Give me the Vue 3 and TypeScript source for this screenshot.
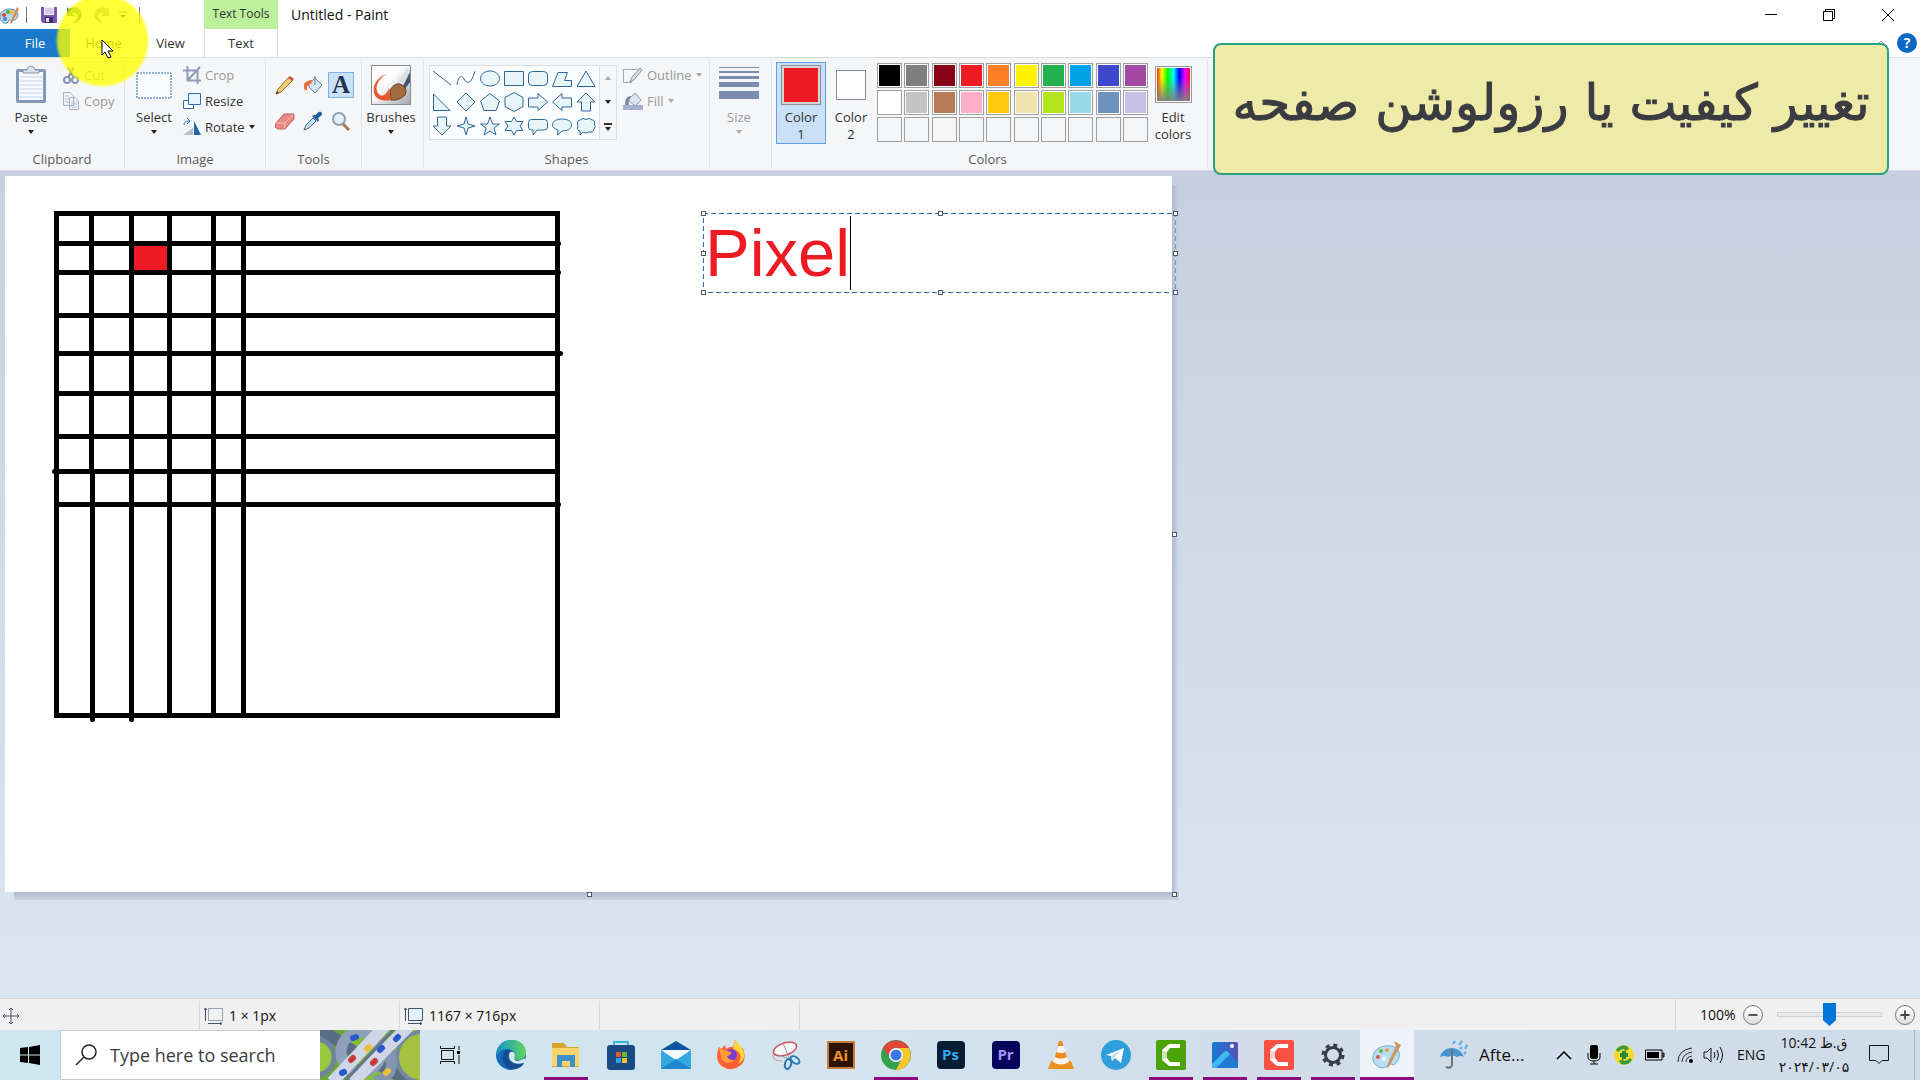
<script setup lang="ts">
import { ref } from 'vue'

interface Line { x1: number; y1: number; x2: number; y2: number }

const drawnText = ref('Pixel')
const zoom = ref(50)
const search = ref('')

const palette: string[] = [
  '#000000', '#7f7f7f', '#880015', '#ed1c24', '#ff7f27', '#fff200', '#22b14c', '#00a2e8', '#3f48cc', '#a349a4',
  '#ffffff', '#c3c3c3', '#b97a57', '#ffaec9', '#ffc90e', '#efe4b0', '#b5e61d', '#99d9ea', '#7092be', '#c8bfe7',
  '', '', '', '', '', '', '', '', '', '',
]

const shapes: { name: string; d: string }[] = [
  { name: 'Line', d: 'M1 3L19 17' },
  { name: 'Curve', d: 'M1 17C2 9 5 6 8 11S15 17 19 3' },
  { name: 'Oval', d: 'M10 3C15 3 19.500 6 19.500 10.500S15 18 10 18S.5 15 .5 10.500S5 3 10 3Z' },
  { name: 'Rectangle', d: 'M.5 3.500H19.500V17.500H.5Z' },
  { name: 'Rounded rectangle', d: 'M4.500 3.500H15.500Q19.500 3.500 19.500 7V14Q19.500 17.500 15.500 17.500H4.500Q.5 17.500 .5 14V7Q.5 3.500 4.500 3.500Z' },
  { name: 'Polygon', d: 'M6 4.500H15.500L12.500 12.500H19.500V18.500H.5Z' },
  { name: 'Triangle', d: 'M10 3L19 18.500H1Z' },
  { name: 'Right triangle', d: 'M1.500 2V18.500H18Z' },
  { name: 'Diamond', d: 'M10 1L19 10L10 19L1 10Z' },
  { name: 'Pentagon', d: 'M10 1.500L19.500 9L16 18.500H4L.5 9Z' },
  { name: 'Hexagon', d: 'M10 .5L19 5.500V14.500L10 19.500L1 14.500V5.500Z' },
  { name: 'Right arrow', d: 'M.5 6H10V1.500L19.500 10L10 18.500V15H.5Z' },
  { name: 'Left arrow', d: 'M19.500 6H10V1.500L.5 10L10 18.500V15H19.500Z' },
  { name: 'Up arrow', d: 'M10 1L19 10H14.500V19H5.500V10H1Z' },
  { name: 'Down arrow', d: 'M10 19L19 10H14.500V1H5.500V10H1Z' },
  { name: 'Four-point star', d: 'M10 1L12 8L19 10L12 12L10 19L8 12L1 10L8 8Z' },
  { name: 'Five-point star', d: 'M10 1L12.500 8H19.500L14 12L16 19L10 15L4 19L6 12L.5 8H7.500Z' },
  { name: 'Six-point star', d: 'M10 1L12.500 5.500H19L16 10L19 14.500H12.500L10 19L7.500 14.500H1L4 10L1 5.500H7.500Z' },
  { name: 'Rounded callout', d: 'M3.500 3.500H16.500Q19.500 3.500 19.500 6.500V11Q19.500 14 16.500 14H9L5 19V14H3.500Q.5 14 .5 11V6.500Q.5 3.500 3.500 3.500Z' },
  { name: 'Oval callout', d: 'M10 3C15 3 19.500 5 19.500 9S15 15 10 15L5.500 19L6 14C3 13 .5 11.500 .5 9C.5 5 5 3 10 3Z' },
  { name: 'Cloud callout', d: 'M4 4Q7 1 10 3.500Q14 1 16 4Q19.500 4 18.500 8Q20 11 18 13Q17 17 13 16Q9 18 7 16L4 19L4 15Q0 14 2 10.500Q0 5 4 4Z' },
]

const verticals: Line[] = [
  { x1: 91, y1: 215, x2: 91, y2: 471 },
  { x1: 92, y1: 471, x2: 92, y2: 719 },
  { x1: 131, y1: 213, x2: 131, y2: 719 },
  { x1: 169, y1: 215, x2: 169, y2: 714 },
  { x1: 213, y1: 215, x2: 213, y2: 714 },
  { x1: 243, y1: 215, x2: 243, y2: 714 },
]
const horizontals: Line[] = [
  { x1: 58, y1: 243, x2: 558, y2: 243 },
  { x1: 56, y1: 272, x2: 558, y2: 272 },
  { x1: 58, y1: 315, x2: 556, y2: 315 },
  { x1: 56, y1: 353, x2: 560, y2: 353 },
  { x1: 58, y1: 393, x2: 556, y2: 393 },
  { x1: 56, y1: 436, x2: 556, y2: 436 },
  { x1: 54, y1: 471, x2: 556, y2: 471 },
  { x1: 56, y1: 504, x2: 558, y2: 504 },
]
const strokes: Line[] = [...verticals, ...horizontals]
const handles: string[] = ['nw', 'n', 'ne', 'w', 'e', 'sw', 's', 'se']
</script>

<template>
  <div class="app">
    <header class="titlebar">
      <div class="quick">
        <svg class="ico20" viewBox="0 0 20 20">
          <path d="M9 4C3 4-1 9 0 13C1 17 4 19 7 18C9 17 8 15 10 15C13 17 18 14 18 10C18 6 14 4 9 4Z" fill="#b5d5ea" stroke="#5e93b8" />
          <circle cx="4" cy="10" r="2" fill="#d8483d" /><circle cx="8" cy="7" r="2" fill="#5caf3f" /><circle cx="12" cy="7" r="2" fill="#e9b93c" /><circle cx="5" cy="14" r="2" fill="#4d7ec9" />
          <path d="M17 2L19 4L12 18L10 19L11 16Z" fill="#d48b45" />
        </svg>
        <i class="bar"></i>
        <button aria-label="Save"><svg viewBox="0 0 16 16"><path d="M0 0H16V16H2L0 14Z" fill="#7b58b5" /><path d="M3 0H13V8H3Z" fill="#f3eefb" /><path d="M4 2H12M4 4H12M4 6H12" stroke="#b8a5d6" /><path d="M4 10H12V16H4Z" fill="#3e2d66" /><path d="M5 11H8V15H5Z" fill="#e6e0f0" /></svg></button>
        <button aria-label="Undo"><svg viewBox="0 0 16 16"><path d="M0 0L2 2Q8-2 13 3Q18 10 9 16H6Q13 10 10 7Q8 5 5 6L8 9H0Z" fill="#4e8a50" /></svg></button>
        <button aria-label="Redo"><svg viewBox="0 0 16 16"><path d="M16 0L14 2Q8-2 3 3Q-2 10 7 16H10Q3 10 6 7Q8 5 11 6L8 9H16Z" fill="#9aa6a0" /></svg></button>
        <button class="more" aria-label="Customize toolbar"><svg viewBox="0 0 8 8"><path d="M0 1H8" stroke="#333" /><path d="M1 4H7L4 7Z" fill="#333" /></svg></button>
        <i class="bar"></i>
      </div>
      <div class="context">Text Tools</div>
      <h1>Untitled - Paint</h1>
      <div class="window-buttons">
        <button aria-label="Minimize"><svg viewBox="0 0 14 14"><path d="M1 6.500H13" stroke="#000" /></svg></button>
        <button aria-label="Restore"><svg viewBox="0 0 14 14"><path d="M1.500 3.500H10.500V12.500H1.500ZM3.500 3V1.500H12.500V10.500H11" fill="none" stroke="#000" /></svg></button>
        <button aria-label="Close"><svg viewBox="0 0 14 14"><path d="M1 1L13 13M13 1L1 13" stroke="#000" /></svg></button>
      </div>
    </header>

    <nav class="tabs">
      <button class="file">File</button>
      <button class="home">Home</button>
      <button class="view">View</button>
      <button class="text">Text</button>
      <div class="help">
        <button aria-label="Collapse ribbon"><svg viewBox="0 0 10 8"><path d="M1 6L5 2L9 6" fill="none" stroke="#888" /></svg></button>
        <button class="q" aria-label="Help">?</button>
      </div>
    </nav>

    <section class="ribbon">
      <div class="group clipboard">
        <div class="body">
          <button class="big">
            <svg width="32" height="40" viewBox="0 0 32 40"><rect x="1" y="4" width="30" height="34" rx="2" fill="#8397b8" /><rect x="4" y="7" width="24" height="28" fill="#f6faff" /><path d="M5 12H27M5 16H27M5 20H27M5 24H27M5 28H27M5 32H27" stroke="#c2d3ea" /><path d="M8 8V5H12C12 0 20 0 20 5H24V8Z" fill="#dbe2ec" stroke="#8594aa" /></svg>
            <span>Paste</span><i class="caret"></i>
          </button>
          <div class="stack">
            <button class="row off"><svg width="18" height="18" viewBox="0 0 18 18"><path d="M6 1L12 12M12 1L6 12" stroke="#77839b" stroke-width="2" /><circle cx="5" cy="14" r="3" fill="none" stroke="#8795b8" stroke-width="2" /><circle cx="13" cy="14" r="3" fill="none" stroke="#8795b8" stroke-width="2" /></svg>Cut</button>
            <button class="row off"><svg width="18" height="18" viewBox="0 0 18 18"><path d="M1.500.5H8L11.500 4V13.500H1.500ZM7.500 5.500H13L16.500 9V17.500H7.500Z" fill="#f2f5fb" stroke="#a5b0c9" /><path d="M3 4H7M3 7H7M3 10H7M9 10H15M9 12H15M9 15H15" stroke="#b4bfd6" /></svg>Copy</button>
          </div>
        </div>
        <h2>Clipboard</h2>
      </div>

      <div class="group image">
        <div class="body">
          <button class="big">
            <svg width="36" height="40" viewBox="0 0 36 40"><rect x="1" y="8" width="34" height="25" fill="#f9fcff" stroke="#2c66a5" stroke-width="1" stroke-dasharray="2 1" /></svg>
            <span>Select</span><i class="caret"></i>
          </button>
          <div class="stack">
            <button class="row off"><svg width="18" height="18" viewBox="0 0 18 18"><path d="M4.500 0V14.500H18M0 4.500H14.500V18M5 14L17 1" fill="none" stroke="#8e9cb8" stroke-width="2" /></svg>Crop</button>
            <button class="row"><svg width="18" height="18" viewBox="0 0 18 18"><path d="M.5 8.500H10.500V16.500H.5Z" fill="#fff" stroke="#2c6cb0" /><path d="M5.500 1.500H17.500V12.500H5.500Z" fill="#eaf4fd" stroke="#2c6cb0" /></svg>Resize</button>
            <button class="row"><svg width="18" height="18" viewBox="0 0 18 18"><path d="M0 17H10V10Z" fill="#b9bcc0" /><path d="M11 17V3L18 17Z" fill="#1f66a8" /><path d="M1 7Q1 3 6 3M4 0L7 3L4 6" fill="none" stroke="#2c7cc8" /></svg>Rotate<i class="caret"></i></button>
          </div>
        </div>
        <h2>Image</h2>
      </div>

      <div class="group tools">
        <div class="tool-grid">
          <button aria-label="Pencil"><svg viewBox="0 0 20 20"><path d="M1 19L3 14L14 2L18 5L6 17Z" fill="#f0cd72" stroke="#8d6b2b" /><path d="M13 3L15 1L19 4L17 6Z" fill="#cb5459" /><path d="M1 19L2 16L4 18Z" fill="#333" /></svg></button>
          <button aria-label="Fill with color"><svg viewBox="0 0 20 20"><path d="M6 9L12 3L19 10L12 18L6 12Z" fill="#d7e7f4" stroke="#607d9b" /><path d="M12 10V1" stroke="#6c7f95" /><path d="M10 5C5 5 0 7 1 12C1 16 4 17 4 13C4 10 7 9 8 9Z" fill="#ec6c35" /></svg></button>
          <button class="on" aria-label="Text">A</button>
          <button aria-label="Eraser"><svg viewBox="0 0 20 20"><path d="M1 12L9 3H19V8L10 18H3L0 16Z" fill="#e98984" stroke="#bc625f" /><path d="M1 12H10L18 4M10 12V17" fill="none" stroke="#f8bab2" /></svg></button>
          <button aria-label="Color picker"><svg viewBox="0 0 20 20"><path d="M1 19L3 14L10 7L13 10L6 17Z" fill="#c4e2f5" stroke="#44617c" /><path d="M9 5L15 11L16 9L15 7C19 5 20 2 18 1S14 2 13 4L11 4Z" fill="#245f9e" /></svg></button>
          <button aria-label="Magnifier"><svg viewBox="0 0 20 20"><circle cx="8" cy="8" r="6" fill="#e2f2fc" stroke="#929fac" stroke-width="2" /><path d="M12 13L18 19" stroke="#a47b57" stroke-width="3" /></svg></button>
        </div>
        <h2>Tools</h2>
      </div>

      <div class="group brushes">
        <div class="body">
          <button class="big">
            <svg width="40" height="40" viewBox="0 0 40 40"><defs><linearGradient id="br" x1="0" x2="1" y1="0" y2="1"><stop offset=".4" stop-color="#fff" /><stop offset="1" stop-color="#9fa6ad" /></linearGradient></defs><rect x=".5" y=".5" width="39" height="39" fill="url(#br)" stroke="#898d91" /><path d="M39 6L28 21L34 24L39 17Z" fill="#46566a" /><path d="M37 2L25 19L31 23L39 7Z" fill="#d9dee3" /><path d="M19 25Q25 16 31 20Q37 24 34 30Q28 36 20 35Z" fill="#a26d3e" stroke="#6b4325" /><path d="M16 9C5 12-1 24 5 32Q10 37 20 35L18 23C15 32 9 32 7 28C3 22 8 13 16 9Z" fill="#e8592e" /></svg>
            <span>Brushes</span><i class="caret"></i>
          </button>
        </div>
      </div>

      <div class="group shapes">
        <div class="body">
          <div class="gallery">
            <button v-for="s in shapes" :key="s.name" :aria-label="s.name"><svg viewBox="0 0 20 20"><path :d="s.d" :fill="s.name === 'Line' || s.name === 'Curve' ? 'none' : '#e8f5fb'" stroke="#2f6899" /></svg></button>
          </div>
          <div class="scroller">
            <button aria-label="Scroll up"><i class="caret up"></i></button>
            <button aria-label="Scroll down"><i class="caret"></i></button>
            <button aria-label="More shapes"><i class="line"></i><i class="caret"></i></button>
          </div>
          <div class="stack">
            <button class="row off"><svg width="20" height="18" viewBox="0 0 20 18"><path d="M.5 3.500H15M.5 3V16.500H9" fill="none" stroke="#a1a8b5" /><path d="M7 16L9 11L17 2L19 4L11 14Z" fill="#d6dbe2" stroke="#8c95a3" /></svg>Outline<i class="caret"></i></button>
            <button class="row off"><svg width="20" height="18" viewBox="0 0 20 18"><path d="M0 13H20V18H0Z" fill="#a5b0ce" /><path d="M5 8L12 1L18 8L12 14Z" fill="#dce5ef" stroke="#8a9ab0" /><path d="M8 4Q2 4 2 13H6Q5 9 7 7Z" fill="#7688a2" /></svg>Fill<i class="caret"></i></button>
          </div>
        </div>
        <h2>Shapes</h2>
      </div>

      <div class="group size">
        <div class="body">
          <button class="big off">
            <svg width="40" height="40" viewBox="0 0 40 40"><path d="M0 2H40V3H0ZM0 6H40V8H0ZM0 11H40V14H0ZM0 17H40V22H0ZM0 26H40V34H0Z" fill="#7c8caf" /></svg>
            <span>Size</span><i class="caret"></i>
          </button>
        </div>
      </div>

      <div class="group colors">
        <div class="body">
          <button class="color on"><i class="swatch red"></i><span>Color<br />1</span></button>
          <button class="color"><i class="swatch white"></i><span>Color<br />2</span></button>
          <div class="palette">
            <button v-for="(c, i) in palette" :key="i" :class="{ empty: !c }" :style="{ backgroundColor: c }" :aria-label="'Palette color ' + (i + 1)"></button>
          </div>
          <button class="color edit"><i class="spectrum"></i><span>Edit<br />colors</span></button>
        </div>
        <h2>Colors</h2>
      </div>
    </section>

    <main class="workspace">
      <div class="sheet">
        <svg class="drawing" width="1167" height="716" viewBox="5 176 1167 716">
          <rect x="131" y="243" width="38" height="29" fill="#ed1c24" />
          <g transform="translate(.5 .5)" fill="none" stroke="#000" stroke-width="5" stroke-linecap="round">
            <rect x="56" y="213" width="501" height="502" />
            <line v-for="(l, i) in strokes" :key="i" :x1="l.x1" :y1="l.y1" :x2="l.x2" :y2="l.y2" />
          </g>
        </svg>
        <div class="textbox">
          <svg class="dash" width="100%" height="100%"><rect width="100%" height="100%" fill="none" stroke="#fff" stroke-width="2" /><rect width="100%" height="100%" fill="none" stroke="#2a6ab0" stroke-width="2" stroke-dasharray="5 3" /></svg>
          <input v-model="drawnText" aria-label="Canvas text" />
          <i class="cursor"></i>
          <i v-for="h in handles" :key="h" class="handle" :class="h"></i>
        </div>
        <i class="handle sheet-e"></i>
        <i class="handle sheet-s"></i>
        <i class="handle sheet-se"></i>
      </div>
    </main>

    <footer class="status">
      <div class="cell"><svg width="18" height="18" viewBox="0 0 18 18"><path d="M9 1V17M1 9H17M7 3L9 1L11 3M7 15L9 17L11 15M3 7L1 9L3 11M15 7L17 9L15 11" fill="none" stroke="#44546e" /></svg></div>
      <div class="cell"><svg width="20" height="18" viewBox="0 0 20 18"><path d="M4.500 1.500H18.500V13.500H4.500Z" fill="none" stroke="#44546e" stroke-dasharray="1 1" /><path d="M1.500 1V14M0 3L1.500 1L3 3M4 16.500H18M16 15L18 16.500L16 18" fill="none" stroke="#44546e" /></svg>1 × 1px</div>
      <div class="cell"><svg width="20" height="18" viewBox="0 0 20 18"><path d="M4.500 1.500H18.500V13.500H4.500Z" fill="#e3f3fc" stroke="#44546e" /><path d="M1.500 1V14M0 3L1.500 1L3 3M4 16.500H18M16 15L18 16.500L16 18" fill="none" stroke="#44546e" /></svg>1167 × 716px</div>
      <div class="cell"></div>
      <div class="zoom">
        <label for="zoom">100%</label>
        <button aria-label="Zoom out"><svg viewBox="0 0 20 20"><path d="M5 10H15" stroke="#444" stroke-width="2" /></svg></button>
        <input id="zoom" v-model="zoom" type="range" min="0" max="100" />
        <button aria-label="Zoom in"><svg viewBox="0 0 20 20"><path d="M5 10H15M10 5V15" stroke="#444" stroke-width="2" /></svg></button>
      </div>
    </footer>

    <div class="taskbar">
      <button class="start" aria-label="Start"><svg width="20" height="20" viewBox="0 0 20 20"><path d="M0 3L8 2V9.500H0ZM9 2L20 0V9.500H9ZM0 10.500H8V18L0 17ZM9 10.500H20V20L9 18Z" /></svg></button>
      <label class="search">
        <svg width="22" height="22" viewBox="0 0 22 22"><circle cx="14" cy="8" r="7" fill="none" stroke="#222" stroke-width="1.500" /><path d="M9 13L1 21" stroke="#222" stroke-width="1.500" /></svg>
        <input v-model="search" placeholder="Type here to search" aria-label="Search" />
      </label>
      <svg class="art" width="100" height="50" viewBox="0 0 100 50">
        <rect width="100" height="50" fill="#80bd38" />
        <path d="M0 0H24L45 50H0Z" fill="#6ca63a" /><path d="M-5-5L40 26M55 32L95 55" stroke="#596d86" stroke-width="12" />
        <circle cx="-4" cy="27" r="18" fill="#97c93d" stroke="#70829c" stroke-width="5" /><circle cx="102" cy="27" r="25" fill="#a6c13f" stroke="#7588a3" stroke-width="4" />
        <circle cx="41" cy="22" r="20" fill="none" stroke="#8fa0bd" stroke-width="11" /><path d="M55 52Q78 46 69 20" fill="none" stroke="#8294af" stroke-width="11" />
        <path d="M12 52L65-4M33 52L90-5" stroke="#ced6e8" stroke-width="12" /><path d="M24 52L77-4" stroke="#65748c" stroke-width="3" />
        <g stroke-width="6" stroke-linecap="round"><path d="M33 8L36 7M76 9L78 7M60 20L62 18M22 43L24 42" stroke="#2758cb" /><path d="M31 30L33 28M53 33L55 31" stroke="#c63b36" /><path d="M47 19L49 17M66 43L68 41" stroke="#ebc03f" /></g>
      </svg>
      <button class="taskview" aria-label="Task view"><svg width="20" height="20" viewBox="0 0 20 20"><path d="M1.500 5.500H13.500V14.500H1.500ZM.5 1V3.500H14.500V1M.5 19V16.500H14.500V19M19 1V5M19 10V19" fill="none" stroke="#111" /><path d="M17 6H20V9H17Z" /></svg></button>

      <div class="apps">
        <button aria-label="Edge"><svg viewBox="0 0 30 30"><defs><linearGradient id="e1" x1="0" x2="1"><stop stop-color="#1595c9" /><stop offset="1" stop-color="#62d65b" /></linearGradient></defs><circle cx="15" cy="15" r="15" fill="#1468b5" /><path d="M1 12C3 3 10 0 16 0C25 0 30 6 30 12C30 17 27 20 22 20C17 20 17 18 18 16C19 11 15 9 11 9C6 9 2 12 1 17Z" fill="url(#e1)" /><path d="M10 10C4 15 6 27 16 29C22 29 26 27 28 23C20 27 12 22 12 16Q12 12 15 11Z" fill="#164b8e" /><path d="M13 16Q13 11 17 12Q20 14 18 18Q18 21 22 21L30 18L29 22Q24 25 18 23Q13 21 13 16Z" fill="#d8eaf1" /></svg></button>
        <button class="run" aria-label="File Explorer"><svg viewBox="0 0 30 30"><path d="M1 3H13L16 7H28V27H1Z" fill="#d9a52a" /><path d="M1 8H28V26H1Z" fill="#f9d56c" /><path d="M6 27V15H24V27H19V21H11V27Z" fill="#3f91cc" /></svg></button>
        <button aria-label="Store"><svg viewBox="0 0 30 30"><path d="M8 7V2H22V7" fill="none" stroke="#35b6e9" stroke-width="2" /><rect x="1" y="5" width="28" height="25" rx="3" fill="#194b82" /><path d="M10 12H15V17H10Z" fill="#e95437" /><path d="M16 12H21V17H16Z" fill="#75b52d" /><path d="M10 18H15V23H10Z" fill="#29a7df" /><path d="M16 18H21V23H16Z" fill="#f4bf30" /></svg></button>
        <button aria-label="Mail"><svg viewBox="0 0 30 30"><path d="M0 10L15 1L30 10Z" fill="#0e559d" /><path d="M3 10H27V20H3Z" fill="#f4f7f9" /><path d="M0 10L15 20L30 10V29H0Z" fill="#36a9e2" /><path d="M0 29L15 19L30 29Z" fill="#1c86cf" /></svg></button>
        <button aria-label="Firefox"><svg viewBox="0 0 30 30"><path d="M3 7L5 9L9 5L10 9Q14 6 17 7L19 0Q25 7 26 9L27 8Q32 22 22 27C14 32 2 28 1 17Q1 11 3 7Z" fill="#ff6037" /><path d="M19 0Q27 7 28 13Q29 21 22 24Q29 13 17 9Z" fill="#ffd638" /><circle cx="15" cy="15" r="6" fill="#7a3bd5" /><path d="M3 8L11 11L15 12Q16 15 11 16Q12 20 18 20Q12 26 6 20Z" fill="#ff9e34" /></svg></button>
        <button aria-label="Snipping Tool"><svg viewBox="0 0 30 30"><ellipse cx="14" cy="9" rx="12" ry="6" transform="rotate(-18 14 9)" fill="#f6f7fa" stroke="#cd5363" stroke-width="1.500" /><path d="M2 14Q1 21 11 21" fill="none" stroke="#dc8a96" /><path d="M12 3L19 20M7 15L22 20" stroke="#8f969f" stroke-width="1" /><ellipse cx="17" cy="24" rx="3" ry="5" transform="rotate(15 17 24)" fill="none" stroke="#2577b4" stroke-width="2" /><ellipse cx="24" cy="20" rx="3" ry="5" transform="rotate(-55 24 20)" fill="none" stroke="#2577b4" stroke-width="2" /></svg></button>
        <button aria-label="Illustrator"><span class="adobe ai">Ai</span></button>
        <button class="run" aria-label="Chrome"><svg viewBox="0 0 30 30"><circle cx="15" cy="15" r="15" fill="#34a24e" /><path d="M2 8A15 15 0 0 1 28 8H15A7 7 0 0 0 9 18Z" fill="#df4637" /><path d="M28 8A15 15 0 0 1 15 30L21 18A7 7 0 0 0 15 8Z" fill="#f9c72d" /><circle cx="15" cy="15" r="7" fill="#fff" /><circle cx="15" cy="15" r="5.500" fill="#3978e5" /></svg></button>
        <button aria-label="Photoshop"><span class="adobe ps">Ps</span></button>
        <button aria-label="Premiere"><span class="adobe pr">Pr</span></button>
        <button aria-label="VLC"><svg viewBox="0 0 30 30"><path d="M5 21H25L28 29H2Z" fill="#ec9020" /><path d="M13 1H16L23 24Q15 28 7 24Z" fill="#f28b1c" /><path d="M12 6H18L20 12Q15 14 10 12ZM9 17Q15 20 21 17L23 22Q15 27 7 22Z" fill="#f5f3ef" /></svg></button>
        <button aria-label="Telegram"><svg viewBox="0 0 30 30"><circle cx="15" cy="15" r="15" fill="#2e9fda" /><path d="M5 15L23 8L20 23L14 18L11 21L10 16Z" fill="#fff" /><path d="M10 16L20 10L13 18L11 21Z" fill="#c5e2f2" /></svg></button>
        <button class="run" aria-label="Camtasia"><svg viewBox="0 0 30 30"><rect width="30" height="30" rx="2" fill="#4ca20b" /><path d="M24 4H13L6 10V20L13 26H24V22H14L11 18V12L14 8H24Z" fill="#fff" /><path d="M6 10L11 12V18L6 20Z" fill="#cfe6bc" /></svg></button>
        <button class="run narrow" aria-label="Photos"><svg viewBox="0 0 30 30"><defs><linearGradient id="ph"><stop stop-color="#1878d0" /><stop offset="1" stop-color="#5551b5" /></linearGradient></defs><rect x="2" y="2" width="26" height="26" rx="2" fill="url(#ph)" /><path d="M2 24L14 12Q16 10 18 12L28 22V28H2Z" fill="#2379d3" /><path d="M2 24L14 12Q16 10 18 12L20 14L6 28H2Z" fill="#3ebcf0" /><circle cx="22" cy="6" r="2" fill="#fff" /></svg></button>
        <button class="run narrow" aria-label="Camtasia Recorder"><svg viewBox="0 0 30 30"><rect width="30" height="30" rx="2" fill="#fb5145" /><path d="M24 4H13L6 10V20L13 26H24V22H14L11 18V12L14 8H24Z" fill="#fff" /><path d="M6 10L11 12V18L6 20Z" fill="#ffd3cc" /></svg></button>
        <button class="run narrow" aria-label="Settings"><svg viewBox="0 0 30 30"><circle cx="15" cy="15" r="7.500" fill="none" stroke="#353c45" stroke-width="3" /><circle cx="15" cy="15" r="10" fill="none" stroke="#353c45" stroke-width="3" stroke-dasharray="4 3.850" /></svg></button>
        <button class="run narrow active" aria-label="Paint"><svg viewBox="0 0 30 30"><path d="M15 6C6 6 0 12 1 20C3 27 11 30 15 26Q17 22 21 25C27 22 29 15 26 10Q22 5 15 6Z" fill="#b7dff1" stroke="#76a8c4" /><circle cx="6" cy="17" r="2" fill="#d9584f" /><circle cx="9" cy="11" r="2" fill="#66b54c" /><circle cx="15" cy="10" r="2" fill="#e6a04c" /><circle cx="12" cy="19" r="2" fill="#fff" /><path d="M22 1L29 5L18 25L15 29L16 23L24 6Z" fill="#c79766" /></svg></button>
      </div>

      <div class="tray">
        <button class="weather"><svg width="28" height="30" viewBox="0 0 28 30"><path d="M0 17C3 5 20 5 24 17Q20 15 17 17Q12 14 8 17Q4 15 0 17Z" fill="#4a96d3" /><path d="M12 9V25Q11 29 6 27" fill="none" stroke="#687380" stroke-width="2" /><path d="M13 4L15 1M19 5L22 1M20 9L22 7M25 9L27 5M24 14L26 12" stroke="#51a9e5" stroke-width="2" /></svg>Afte...</button>
        <svg class="t-up" width="16" height="16" viewBox="0 0 16 16"><path d="M1 12L8 5L15 12" fill="none" stroke="#000" stroke-width="1.500" /></svg>
        <svg class="t-mic" width="14" height="20" viewBox="0 0 14 20"><rect x="3" width="8" height="14" rx="2" /><path d="M1 8V12Q1 16 7 16T13 12V8M7 16V19M3 19H11" fill="none" stroke="#000" /></svg>
        <svg class="t-idm" width="20" height="20" viewBox="0 0 20 20"><circle cx="10" cy="10" r="10" fill="#f5d829" /><path d="M2 5Q6-1 13 1L15 4L11 6L10 4Q7 4 4 7ZM18 15Q14 21 7 19L5 16L9 14L10 16Q13 16 16 13Z" fill="#3b9a3c" /><path d="M8 6H12V8H14V12H12V14H8V12H6V8H8Z" fill="#278a3b" /></svg>
        <svg class="t-bat" width="20" height="12" viewBox="0 0 20 12"><path d="M.5 1H17V11H.5ZM18 4H19V8H18Z" fill="none" stroke="#000" /><path d="M2 3H14V9H2Z" /></svg>
        <svg class="t-wifi" width="16" height="16" viewBox="0 0 16 16"><path d="M1 15Q1 3 15 1M5 15Q5 7 15 5M9 15Q9 10 15 9" fill="none" stroke="#222" /><circle cx="14" cy="14" r="2" /></svg>
        <svg class="t-vol" width="22" height="18" viewBox="0 0 22 18"><path d="M1 6H4L8 2V16L4 12H1ZM11 6Q13 9 11 12M14 4Q17 9 14 14M17 1Q22 9 17 17" fill="none" stroke="#111" /></svg>
        <span class="lang">ENG</span>
        <div class="clock"><span>10:42 ق.ظ</span><span>۲۰۲۴/۰۳/۰۵</span></div>
        <svg class="t-note" width="20" height="20" viewBox="0 0 20 20"><path d="M.5.5H19.500V15.500H13L10 18.500L7 15.500H.5Z" fill="none" stroke="#111" /></svg>
        <i class="peek"></i>
      </div>
    </div>

    <div class="banner" dir="rtl">تغییر کیفیت یا رزولوشن صفحه</div>
    <div class="spot"></div>
    <svg class="pointer" width="14" height="20" viewBox="0 0 14 20"><path d="M1 1V16L4 13L7 19L10 18L7 12H12Z" fill="#fff" stroke="#000" /></svg>
  </div>
</template>

<style>
body { margin: 0; }
</style>

<style scoped>
* { box-sizing: border-box; }
.app { position: relative; display: flex; flex-direction: column; min-height: 100vh; overflow: hidden; background: #fff; color: #333; font: 13px/16px "Open Sans", "Noto Sans", sans-serif; }
button { padding: 0; border: 0; background: none; color: inherit; font: inherit; }
svg { display: block; flex: none; }
h1, h2 { margin: 0; font-weight: 400; }

.titlebar { display: flex; height: 29px; }
.quick { display: flex; align-items: center; width: 204px; }
.ico20 { width: 20px; height: 20px; }
.quick .bar { width: 1px; height: 16px; margin: 0 14px 0 6px; background: #777; }
.quick button { width: 16px; margin-right: 10px; }
.quick .more { width: 8px; margin-right: 6px; }
.context { width: 74px; background: #bdf09c; line-height: 28px; text-align: center; font-size: 12px; }
h1 { padding-left: 13px; font-size: 14px; line-height: 29px; color: #111; }
.window-buttons { display: flex; align-items: center; margin-left: auto; padding-right: 2px; }
.window-buttons button { display: grid; place-items: center; width: 58px; height: 27px; }
.window-buttons svg { width: 14px; height: 14px; }
.window-buttons button:last-child { width: 60px; }

.tabs { display: flex; height: 28px; line-height: 28px; font-size: 13px; }
.file { width: 70px; background: #1979ca; color: #fff; }
.home { width: 67px; }
.view { width: 67px; }
.text { width: 74px; border: solid #dadbdc; border-width: 0 1px; }
.help { display: flex; align-items: center; gap: 11px; margin-left: auto; padding-right: 3px; }
.help svg { width: 10px; height: 8px; }
.help .q { width: 20px; height: 20px; border-radius: 50%; background: #0a68c4; color: #fff; font-weight: 700; font-size: 14px; line-height: 20px; }

.ribbon { display: flex; height: 114px; padding-top: 2px; border: solid #dadbdc; border-width: 1px 0; background: #f5f6f7; }
.group { display: flex; flex-direction: column; flex: none; height: 109px; border-right: 1px solid #e2e3e4; }
.group h2 { margin-top: auto; padding-bottom: 1px; font-size: 13px; line-height: 18px; color: #5a5a5a; text-align: center; }
.body { display: flex; padding-top: 5px; }
.big { display: flex; flex-direction: column; align-items: center; width: 62px; height: 76px; }
.big span { margin-top: 4px; }
.caret { display: block; flex: none; width: 0; height: 0; border: solid transparent; border-width: 4px 3px 0; border-top-color: #222; }
.big .caret { margin-top: 5px; }
.off { color: #999; }
.off .caret { border-top-color: #aaa; }
.stack { display: flex; flex-direction: column; gap: 8px; padding-top: 1px; }
.row { display: flex; align-items: center; gap: 4px; height: 18px; white-space: nowrap; }
.clipboard { width: 125px; }
.image { width: 141px; }
.image .big { width: 58px; }
.tools { width: 96px; }
.tool-grid { display: grid; grid-template-columns: repeat(3, 26px); grid-auto-rows: 26px; gap: 10px 2px; padding: 12px 0 0 6px; }
.tool-grid button { display: grid; place-items: center; }
.tool-grid svg { width: 20px; height: 20px; }
.tool-grid .on { border: 1px solid #7db2e8; background: #c9e0f7; color: #1d3252; font: 700 25px/24px "Liberation Serif", serif; }
.brushes { width: 62px; }
.brushes .big { width: 58px; }
.shapes { width: 286px; }
.shapes .body { padding-left: 5px; }
.gallery { display: grid; grid-template-columns: repeat(7, 24px); grid-auto-rows: 24px; width: 171px; height: 75px; border: 1px solid #dcdfe3; background: #fbfdff; }
.gallery button { display: grid; place-items: center; }
.gallery svg { width: 20px; height: 20px; }
.scroller { display: grid; grid-template-rows: repeat(3, 1fr); width: 17px; height: 75px; border: 1px solid #dcdfe3; border-left: 0; }
.scroller button { display: flex; flex-direction: column; align-items: center; justify-content: center; gap: 2px; }
.scroller .up { border-width: 0 3px 4px; border-bottom-color: #aaa; }
.scroller .line { width: 8px; height: 2px; background: #333; }
.shapes .stack { padding-left: 6px; }
.size { width: 62px; }
.size .big { width: 58px; }
.colors { width: 436px; }
.colors .body { padding: 2px 0 0 4px; }
.colors h2 { padding-right: 4px; }
.color { display: flex; flex-direction: column; align-items: center; width: 50px; height: 82px; padding-top: 2px; border: 1px solid transparent; line-height: 17px; }
.color.on { border-color: #62a2e4; background: #c9e0f7; }
.color span { margin-top: 4px; }
.swatch { width: 40px; height: 40px; border: 1px solid #8a8d91; box-shadow: inset 0 0 0 2px #d5d5d8; }
.red { background: #ed1c24; }
.white { width: 30px; height: 30px; margin: 5px; background: #fff; box-shadow: none; }
.palette { display: grid; grid-template-columns: repeat(10, 25px); grid-auto-rows: 25px; justify-content: space-between; gap: 2px 0; width: 271px; margin: 0 1px; padding-top: 1px; }
.palette button { border: 1px solid #a0a0a0; box-shadow: inset 0 0 0 1px #fff; }
.palette .empty { box-shadow: none; }
.edit { width: 48px; }
.spectrum { width: 37px; height: 37px; margin: 1px 0 2px; border: 1px solid #999; box-shadow: inset 0 0 0 1px #fff; background: linear-gradient(transparent 30%, #808080), linear-gradient(90deg, red, #ff0, #0f0, #0ff, #00f, #f0f, red); }

.workspace { flex: 1; padding: 5px; background: linear-gradient(#c5cfdf, #dce6f2); }
.sheet { position: relative; width: 1167px; height: 716px; background: #fff; }
.sheet::before, .sheet::after { content: ""; position: absolute; }
.sheet::before { left: 9px; right: -7px; top: 100%; height: 8px; background: linear-gradient(#b0b9ce, #cbd4e3); }
.sheet::after { top: 9px; bottom: 0; left: 100%; width: 7px; background: linear-gradient(90deg, #aebbd0, transparent); }
.textbox { position: absolute; left: 698px; top: 37px; width: 473px; height: 80px; }
.textbox .dash { position: absolute; inset: 0; }
.textbox input { position: absolute; left: 2px; top: 3px; width: 440px; height: 74px; padding: 0; border: 0; outline: 0; background: transparent; color: #ed1c24; font: 67px/74px "Liberation Sans", Arial, sans-serif; }
.cursor { position: absolute; left: 147px; top: 3px; width: 1px; height: 74px; background: #000; }
.handle { position: absolute; z-index: 1; width: 5px; height: 5px; border: 1px solid #4e5866; background: #fff; }
.nw, .w, .sw { left: -2px; }
.n, .s { left: calc(50% - 2px); }
.ne, .e, .se { right: -2px; }
.nw, .n, .ne { top: -2px; }
.w, .e { top: calc(50% - 2px); }
.sw, .s, .se { bottom: -2px; }
.sheet-e { left: 100%; top: calc(50% - 2px); }
.sheet-s { left: calc(50% - 2px); top: 100%; }
.sheet-se { left: 100%; top: 100%; }

.status { display: flex; height: 32px; border-top: 1px solid #d7d7d7; background: #f0f0f0; color: #111; font-size: 14px; }
.cell { display: flex; align-items: center; gap: 5px; width: 200px; margin-top: 2px; padding-left: 4px; border-right: 1px solid #d9d9d9; }
.cell:first-child { padding-left: 2px; }
.zoom { display: flex; align-items: center; margin-left: auto; padding: 0 5px 0 24px; border-left: 1px solid #d9d9d9; }
.zoom label { width: 43px; font-size: 14px; }
.zoom button { width: 20px; height: 20px; border: 1px solid #777; border-radius: 50%; background: linear-gradient(#fff, #ddd); }
.zoom svg { width: 18px; height: 18px; }
.zoom input { width: 105px; height: 24px; margin: 0 13px 0 14px; appearance: none; background: none; }
.zoom input::-webkit-slider-runnable-track { height: 5px; border: 1px solid #d2d2d2; background: #e7eaea; }
.zoom input::-webkit-slider-thumb { appearance: none; width: 13px; height: 23px; margin-top: -10px; background: #0078d7; clip-path: polygon(0 0, 100% 0, 100% 75%, 50% 100%, 0 75%); }

.taskbar { display: flex; height: 50px; background: linear-gradient(90deg, #cfe7ef, #d3e4ee 45%, #d2dde9 65%, #d0dce9); }
.start { display: grid; place-items: center; width: 60px; }
.search { display: flex; align-items: center; gap: 13px; width: 260px; padding-left: 14px; border: 1px solid #c5cdd1; border-right: 0; background: #fff; }
.search input { width: 200px; padding: 0; border: 0; outline: 0; font: 18px/24px "Open Sans", sans-serif; }
.search input::placeholder { color: #3c3c3c; opacity: 1; }
.taskview { display: grid; place-items: center; width: 63px; padding-right: 3px; }
.apps { display: flex; }
.apps button { display: grid; place-items: center; width: 55px; height: 50px; }
.apps .narrow { width: 54px; }
.apps svg { width: 30px; height: 30px; }
.apps .run { background: linear-gradient(#8a0a80, #8a0a80) center bottom / 44px 3px no-repeat; }
.apps .active { background: linear-gradient(#8a0a80, #8a0a80) center bottom / 54px 3px no-repeat, #edf3f9; }
.adobe { width: 28px; height: 28px; border-radius: 4px; font: 700 15px/26px "Open Sans", sans-serif; text-align: center; }
.ai { border: 2px solid #c67c37; border-radius: 1px; background: #2b1204; color: #f2942e; line-height: 24px; }
.ps { background: #061d33; color: #35a6f5; }
.pr { background: #07045b; color: #a493f9; }
.tray { display: flex; align-items: center; margin-left: auto; color: #111; }
.weather { display: flex; align-items: center; gap: 11px; width: 116px; font-size: 17px; }
.t-mic { margin-left: 15px; }
.t-idm { margin-left: 13px; }
.t-bat { margin-left: 11px; }
.t-wifi { margin-left: 12px; }
.t-vol { margin-left: 10px; }
.lang { width: 54px; padding-left: 12px; font-size: 14px; }
.clock { display: flex; flex-direction: column; gap: 8px; width: 70px; align-items: center; font: 14px/16px "Open Sans", "DejaVu Sans", sans-serif; white-space: nowrap; }
.t-note { margin-left: 20px; }
.peek { width: 1px; height: 50px; margin: 0 5px 0 25px; background: #a9b4c0; }

.banner { position: absolute; top: 43px; right: 31px; width: 676px; height: 132px; border: 2px solid #2ba183; border-radius: 8px; background: #eeeba8; color: #3b3b42; font: 400 50px/116px "DejaVu Sans", sans-serif; -webkit-text-stroke: 1px #3b3b42; text-align: center; white-space: nowrap; }
.spot { position: absolute; top: -7px; left: 55px; width: 95px; height: 95px; border-radius: 50%; background: radial-gradient(closest-side, rgba(255, 255, 0, .78) 92%, rgba(255, 255, 0, 0)); pointer-events: none; }
.pointer { position: absolute; top: 39px; left: 101px; }
</style>
